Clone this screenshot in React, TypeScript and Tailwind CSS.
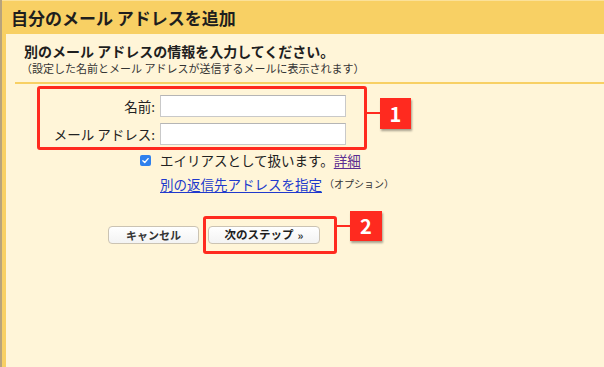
const font = "font-['Noto_Sans_CJK_JP','Liberation_Sans',sans-serif]"

function Badge({ n, className }: { n: string; className: string }) {
	return (
		<div
			className={`absolute flex items-center justify-center bg-[#ff2a1f] text-[20px] font-bold leading-none text-white shadow-[1px_2px_2px_rgba(0,0,0,0.35)] ${className}`}
		>
			{n}
		</div>
	)
}

function Field({ label }: { label: string }) {
	return (
		<div className="flex items-center">
			<label className="w-[120px] pr-[5px] text-right text-[13.5px] leading-[18px] text-[#222]">
				{label}
			</label>
			<input
				type="text"
				className="h-[22px] w-[186px] border border-[#c9c9c9] border-t-[#b5b5b5] bg-white outline-none"
			/>
		</div>
	)
}

export default function App() {
	return (
		<div
			className={`flex h-[367px] w-[604px] flex-col overflow-hidden border-l-2 border-[#b8a37c] bg-[#fff5d8] ${font}`}
		>
			<div className="flex h-[34px] shrink-0 items-center border-t border-[#fbe199] bg-[#f8d064] pl-[9px]">
				<h1 className="text-[17px] font-bold leading-[20px] text-[#1e1e1e]">
					自分のメール アドレスを追加
				</h1>
			</div>

			<div className="flex flex-1 flex-col border-l-4 border-[#f8d064]">
				<div className="pt-[7px]">
					<div className="pl-[18px] text-[14px] font-bold leading-[20px] text-[#1e1e1e]">
						別のメール アドレスの情報を入力してください。
					</div>
					<div className="pl-[15px] text-[11px] leading-[14px] text-[#333]">
						（設定した名前とメール アドレスが送信するメールに表示されます）
					</div>
				</div>
				<div className="ml-[9px] mt-[7px] h-[2px] bg-[#f8d064]" />

				<div className="relative ml-[31px] mt-[2px] w-[330px] rounded-[3px] border-[3px] border-[#ff2a1f] pb-[2px] pt-[6px]">
					<div className="flex flex-col gap-[6px]">
						<Field label="名前:" />
						<Field label="メール アドレス:" />
					</div>
					<div className="absolute left-[327px] top-[23px] h-[2px] w-[14px] bg-[#ff2a1f]" />
					<Badge n="1" className="left-[340px] top-[9px] h-[31px] w-[31px]" />
				</div>

				<div className="ml-[134px] mt-[1px] flex h-[18px] items-center gap-[9px] text-[13.5px] leading-[18px] text-[#222]">
					<span className="flex h-[11px] w-[11px] items-center justify-center rounded-[2px] bg-[#2f80ed]">
						<svg viewBox="0 0 12 12" className="h-[9px] w-[9px]">
							<path
								d="M2.5 6.3 L5 8.7 L9.5 3.5"
								fill="none"
								stroke="white"
								strokeWidth="1.8"
								strokeLinecap="round"
								strokeLinejoin="round"
							/>
						</svg>
					</span>
					<span>
						エイリアスとして扱います。
						<a className="text-[#5c2d91] underline underline-offset-2">詳細</a>
					</span>
				</div>

				<div className="ml-[154px] mt-[6px] flex h-[18px] items-center leading-[18px]">
					<a className="text-[13.5px] text-[#2039cc] underline underline-offset-2">
						別の返信先アドレスを指定
					</a>
					<span className="ml-[2px] text-[10px] text-[#333]">（オプション）</span>
				</div>

				<div className="ml-[102px] mt-[23px] flex items-center gap-[4px]">
					<button className="h-[18px] w-[91px] rounded-[4px] border border-[#cbc3b3] bg-gradient-to-b from-white to-[#f3f3f3] text-[11px] font-semibold leading-none text-[#333]">
						キャンセル
					</button>
					<div className="relative rounded-[3px] border-[3px] border-[#ff2a1f] pb-[7px] pl-[2px] pr-[14px] pt-[7px]">
						<button className="flex h-[18px] w-[112px] items-center justify-center gap-[4px] rounded-[4px] border border-[#cbc3b3] bg-gradient-to-b from-white to-[#f3f3f3] text-[11.5px] font-bold leading-none text-[#1e1e1e]">
							次のステップ
							<span className="text-[11px] text-[#333]">»</span>
						</button>
						<div className="absolute left-[131px] top-[6px] h-[2px] w-[14px] bg-[#ff2a1f]" />
						<Badge n="2" className="left-[144px] top-[-8px] h-[30px] w-[32px]" />
					</div>
				</div>
			</div>
		</div>
	)
}
